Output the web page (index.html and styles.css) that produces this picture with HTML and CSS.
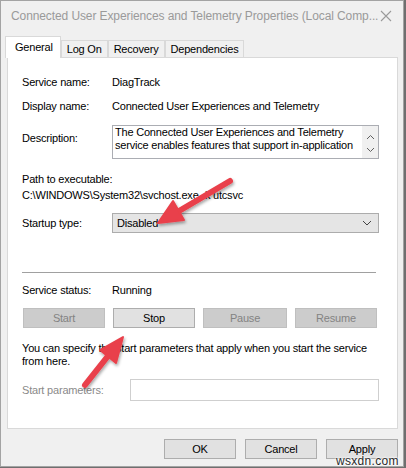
FILE: index.html
```html
<!DOCTYPE html>
<html lang="en">
<head>
  <meta charset="UTF-8" />
  <title>Connected User Experiences and Telemetry Properties</title>
  <link rel="stylesheet" href="styles.css">
</head>
<body>
  <div class="window">
    <div class="titlebar">
      <span class="title">Connected User Experiences and Telemetry Properties (Local Comp...</span>
      <svg class="close" width="12" height="12" viewBox="0 0 12 12">
        <path d="M1 1 L11 11 M11 1 L1 11" stroke="#9a9a9a" stroke-width="1.1" fill="none"/>
      </svg>
    </div>

    <div class="tabs">
      <div class="tab active">General</div>
      <div class="tab">Log On</div>
      <div class="tab">Recovery</div>
      <div class="tab">Dependencies</div>
    </div>

    <div class="panel">
      <div class="row">
        <span class="label">Service name:</span>
        <span>DiagTrack</span>
      </div>
      <div class="row row-display">
        <span class="label">Display name:</span>
        <span>Connected User Experiences and Telemetry</span>
      </div>
      <div class="row row-desc">
        <span class="label">Description:</span>
        <div class="desc-box">
          <p class="desc-text">The Connected User Experiences and Telemetry service enables features that support in-application</p>
          <div class="desc-scroll">
            <svg width="9" height="6" viewBox="0 0 9 6"><path d="M1 5 L4.5 1.5 L8 5" stroke="#606060" fill="none"/></svg>
            <svg width="9" height="6" viewBox="0 0 9 6"><path d="M1 1 L4.5 4.5 L8 1" stroke="#606060" fill="none"/></svg>
          </div>
        </div>
      </div>

      <div class="path-label">Path to executable:</div>
      <div class="path-value">C:\WINDOWS\System32\svchost.exe -k utcsvc</div>

      <div class="row row-startup">
        <span class="label">Startup type:</span>
        <div class="select">
          <span>Disabled</span>
          <svg width="10" height="6" viewBox="0 0 10 6"><path d="M1 1 L5 5 L9 1" stroke="#444" fill="none"/></svg>
        </div>
      </div>

      <div class="separator"></div>

      <div class="row row-status">
        <span class="label">Service status:</span>
        <span>Running</span>
      </div>

      <div class="svc-buttons">
        <button class="btn disabled">Start</button>
        <button class="btn">Stop</button>
        <button class="btn disabled wide">Pause</button>
        <button class="btn disabled">Resume</button>
      </div>

      <p class="hint">You can specify the start parameters that apply when you start the service from here.</p>

      <div class="row row-params">
        <span class="label muted">Start parameters:</span>
        <div class="param-input"></div>
      </div>
    </div>

    <div class="dialog-buttons">
      <button class="btn">OK</button>
      <button class="btn">Cancel</button>
      <button class="btn">Apply</button>
    </div>
  </div>

  <!-- callout arrows drawn over the dialog -->
  <svg class="arrows" width="406" height="468" viewBox="0 0 406 468">
    <defs>
      <filter id="shade" x="-20%" y="-20%" width="140%" height="140%">
        <feDropShadow dx="1" dy="2" stdDeviation="1.5" flood-color="#000" flood-opacity="0.35"/>
      </filter>
    </defs>
    <g fill="#e9414b" stroke="#e9414b" filter="url(#shade)">
      <line x1="230" y1="181" x2="179" y2="211" stroke-width="6" stroke-linecap="round"/>
      <polygon points="158,223 184,220 173,201" stroke-width="2" stroke-linejoin="round"/>
      <line x1="85" y1="385" x2="108" y2="356" stroke-width="6" stroke-linecap="round"/>
      <polygon points="123,337 116,363 100,350" stroke-width="2" stroke-linejoin="round"/>
    </g>
  </svg>

  <div class="watermark">wsxdn.com</div>
</body>
</html>
```

FILE: styles.css
```css
* {
  margin: 0;
  padding: 0;
  box-sizing: border-box;
}

body {
  width: 406px;
  height: 468px;
  background-color: #6f6f6f;
  font-family: "Liberation Sans", Arial, sans-serif;
  font-size: 11px;
  letter-spacing: -0.2px;
  color: #000;
  position: relative;
  overflow: hidden;
}

.window {
  width: 404px;
  height: 467px;
  background-color: #f0f0f0;
  border: 1px solid #a3a3a3;
}

.titlebar {
  height: 30px;
  display: flex;
  align-items: center;
  justify-content: space-between;
  padding: 0 11px 0 10px;
}

.title {
  font-size: 12px;
  letter-spacing: -0.1px;
  color: #9a9a9a;
  white-space: nowrap;
}

/* tabs */
.tabs {
  display: flex;
  align-items: flex-end;
  height: 21px;
  margin-top: 5px;
  padding-left: 4px;
  position: relative;
  z-index: 1;
}

.tab {
  height: 17px;
  line-height: 16px;
  padding: 0 5px;
  border: 1px solid #d9d9d9;
  border-bottom: none;
  background-color: #f0f0f0;
}

.tab.active {
  height: 22px;
  line-height: 20px;
  padding: 0 7px 0 9px;
  margin-bottom: -1px;
  background-color: #fff;
}

/* general page */
.panel {
  height: 372px;
  margin: 0 5px 0 6px;
  padding: 16px 18px 0 14px;
  background-color: #fff;
  border: 1px solid #d9d9d9;
}

.row {
  display: flex;
  align-items: center;
  min-height: 16px;
  line-height: 16px;
}

.label {
  width: 90px;
  flex-shrink: 0;
}

.muted {
  color: #8a8a8a;
}

.row-display {
  margin-top: 8px;
}

.row-desc {
  margin-top: 11px;
  align-items: flex-start;
}

.row-desc .label {
  margin-top: 5px;
}

.desc-box {
  flex: 1;
  height: 34px;
  display: flex;
  border: 1px solid #abadb3;
}

.desc-text {
  flex: 1;
  height: 32px;
  overflow: hidden;
  padding: 0 0 0 2px;
  line-height: 13px;
}

.desc-scroll {
  width: 16px;
  background-color: #f0f0f0;
  display: flex;
  flex-direction: column;
  align-items: center;
  justify-content: space-between;
  padding: 8px 0 5px;
}

.path-label {
  margin-top: 12px;
  line-height: 16px;
}

.path-value {
  line-height: 16px;
}

.row-startup {
  margin-top: 10px;
}

.select {
  flex: 1;
  height: 20px;
  display: flex;
  align-items: center;
  justify-content: space-between;
  padding: 0 6px 0 4px;
  background-color: #e5e5e5;
  border: 1px solid #acacac;
}

.separator {
  height: 1px;
  margin: 39px 3px 0 0;
  background-color: #a0a0a0;
}

.row-status {
  margin-top: 9px;
}

.svc-buttons {
  display: flex;
  gap: 8px;
  margin: 10px 0 0 1px;
}

.btn {
  width: 82px;
  height: 20px;
  font-family: inherit;
  font-size: 11px;
  line-height: 12px;
  letter-spacing: -0.2px;
  color: #000;
  background-color: #e1e1e1;
  border: 1px solid #adadad;
}

.btn.wide {
  width: 84px;
}

.btn.disabled {
  color: #838383;
  background-color: #cccccc;
  border-color: #bfbfbf;
}

.hint {
  margin-top: 14px;
  line-height: 13px;
}

.row-params {
  margin-top: 11px;
}

.row-params .label {
  width: 108px;
}

.param-input {
  flex: 1;
  height: 22px;
  border: 1px solid #cfcfcf;
}

/* OK / Cancel / Apply */
.dialog-buttons {
  display: flex;
  justify-content: flex-end;
  gap: 9px;
  margin: 10px 5px 0 0;
}

.dialog-buttons .btn {
  width: 72px;
  line-height: 10px;
}

.arrows {
  position: absolute;
  left: 0;
  top: 0;
  pointer-events: none;
}

.watermark {
  position: absolute;
  left: 336px;
  top: 456px;
  font-size: 12px;
  line-height: 10px;
  letter-spacing: 0.3px;
  color: #2a2a2a;
  text-shadow: 0 0 2px #fff, 0 0 2px #fff, 0 0 3px #fff;
}
```
